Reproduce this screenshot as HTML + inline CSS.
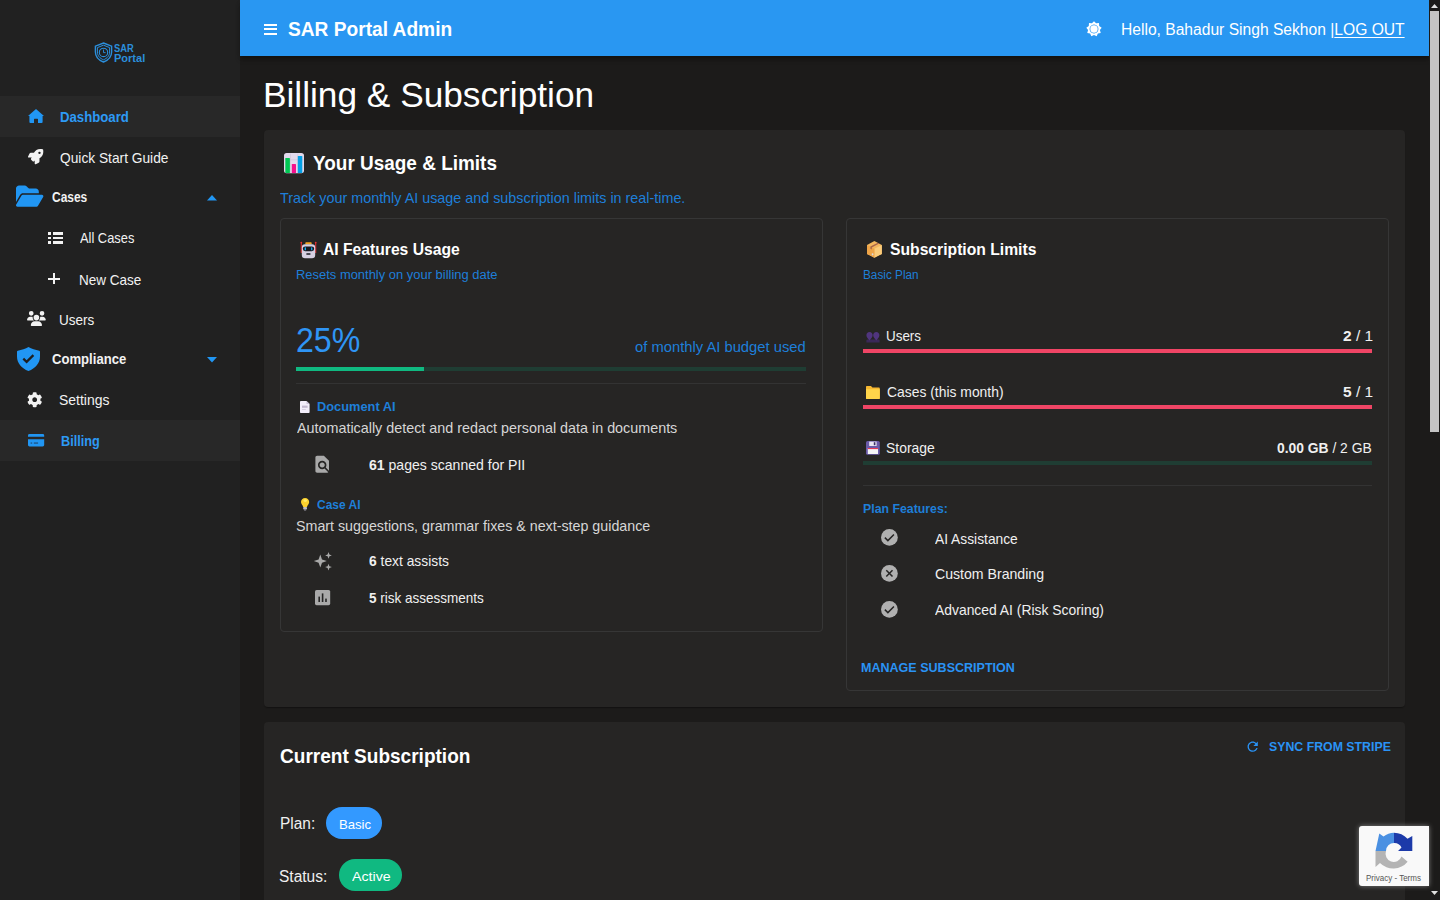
<!DOCTYPE html>
<html><head><meta charset="utf-8">
<style>
html,body{margin:0;padding:0;}
body{width:1440px;height:900px;overflow:hidden;position:relative;background:#1c1b1a;font-family:"Liberation Sans",sans-serif;color:#fff;}
.a{position:absolute;white-space:pre;line-height:1;}
.a b{font-weight:700;}
svg{position:absolute;display:block;overflow:visible;}
.r{position:absolute;}
</style></head><body>
<!-- sidebar -->
<div class="r" style="left:0;top:0;width:240px;height:900px;background:#212121"></div>
<div class="r" style="left:0;top:96px;width:240px;height:41px;background:#282828"></div>
<div class="r" style="left:0;top:420px;width:240px;height:41px;background:#282828"></div>
<!-- header -->
<div class="r" style="left:240px;top:0;width:1189px;height:56px;background:#2997f2;box-shadow:0 2px 4px -1px rgba(0,0,0,.3),0 4px 5px 0 rgba(0,0,0,.2)"></div>
<!-- cards -->
<div class="r" style="left:264px;top:130px;width:1141px;height:577px;background:#262524;border-radius:4px;box-shadow:0 2px 1px -1px rgba(0,0,0,.2),0 1px 1px 0 rgba(0,0,0,.14)"></div>
<div class="r" style="left:280px;top:218px;width:543px;height:414px;border:1px solid #363636;border-radius:4px;box-sizing:border-box"></div>
<div class="r" style="left:846px;top:218px;width:543px;height:473px;border:1px solid #363636;border-radius:4px;box-sizing:border-box"></div>
<div class="r" style="left:264px;top:722px;width:1141px;height:200px;background:#262524;border-radius:4px"></div>
<!-- scrollbar -->
<div class="r" style="left:1429px;top:0;width:11px;height:900px;background:#1c1b1a"></div>
<div class="r" style="left:1430px;top:11px;width:9px;height:421px;background:#c4c4c4"></div>

<!-- progress bars -->
<div class="r" style="left:296px;top:367px;width:510px;height:4px;background:#1f3d33"></div>
<div class="r" style="left:296px;top:367px;width:128px;height:4px;background:#10b981"></div>
<div class="r" style="left:296px;top:383px;width:510px;height:1px;background:#333"></div>
<div class="r" style="left:863px;top:349px;width:509px;height:4px;background:#ef4565"></div>
<div class="r" style="left:863px;top:405px;width:509px;height:4px;background:#ef4565"></div>
<div class="r" style="left:863px;top:461px;width:509px;height:4px;background:#1f3d33"></div>
<div class="r" style="left:863px;top:485px;width:509px;height:1px;background:#333"></div>

<!-- chips -->
<div class="r" style="left:326px;top:807px;width:56px;height:32px;border-radius:16px;background:#3399ff"></div>
<div class="r" style="left:339.4px;top:859px;width:62.4px;height:32px;border-radius:16px;background:#10b981"></div>

<!-- recaptcha -->
<div class="r" style="left:1359px;top:826px;width:70px;height:60px;background:#f9f9f9;border-radius:3px 0 0 3px;box-shadow:0 0 5px gray"></div>

<!-- ===== ICONS ===== -->
<!-- logo shield -->
<svg style="left:94px;top:41.5px" width="19" height="21" viewBox="0 0 19 21">
 <path d="M9.5 1 L17.6 4.2 V10 C17.6 14.8 14.2 18.2 9.5 20 C4.8 18.2 1.4 14.8 1.4 10 V4.2 Z" fill="none" stroke="#2b8fdc" stroke-width="1.4"/>
 <path d="M9.5 3.2 L15.6 5.6 V10 C15.6 13.8 13 16.4 9.5 17.8 C6 16.4 3.4 13.8 3.4 10 V5.6 Z" fill="none" stroke="#2b8fdc" stroke-width="1"/>
 <circle cx="9.5" cy="10.4" r="4.2" fill="none" stroke="#2b8fdc" stroke-width="1.1"/>
 <path d="M9.5 7.6 V10.6 H11.6" fill="none" stroke="#2b8fdc" stroke-width="0.9"/>
</svg>
<!-- hamburger -->
<div class="r" style="left:264px;top:23.5px;width:12.5px;height:2px;background:#fff"></div>
<div class="r" style="left:264px;top:28.2px;width:12.5px;height:2px;background:#fff"></div>
<div class="r" style="left:264px;top:32.6px;width:12.5px;height:2px;background:#fff"></div>
<!-- sun -->
<svg style="left:1085.6px;top:20.7px" width="16" height="16" viewBox="0 0 16 16"><path fill="#fff" fill-rule="evenodd" d="M8.00 0.20 L10.05 2.36 L13.01 2.02 L13.20 5.00 L15.68 6.65 L13.91 9.04 L14.75 11.90 L11.86 12.60 L10.67 15.33 L8.00 14.00 L5.33 15.33 L4.14 12.60 L1.25 11.90 L2.09 9.04 L0.32 6.65 L2.80 5.00 L2.99 2.02 L5.95 2.36Z M8 3.6 A4.4 4.4 0 1 0 8.001 3.6Z"/><circle cx="8" cy="8" r="3.7" fill="#fff"/></svg>
<!-- home -->
<svg style="left:28px;top:109px" width="16" height="14" viewBox="0 0 16 14"><path fill="#2196f3" d="M8 0 L16 6.9 L14.6 6.9 L14.6 13 Q14.6 14 13.6 14 L10 14 L10 10.2 Q10 9.8 9.6 9.8 L6.4 9.8 Q6 9.8 6 10.2 L6 14 L2.4 14 Q1.4 14 1.4 13 L1.4 6.9 L0 6.9 Z"/></svg>
<!-- rocket -->
<svg style="left:27.5px;top:149px" width="15.3" height="15.3" viewBox="0 0 512 512"><path fill="#f2f2f2" d="M505.12019,19.09375c-1.18945-5.53125-6.65819-11-12.207-12.1875C460.716,0,435.507,0,410.40747,0,307.17523,0,245.26909,55.20312,199.05238,128H94.83772c-16.34763.01562-35.55658,11.875-42.88664,26.48438L2.51562,253.29688A28.4,28.4,0,0,0,0,264a24.00867,24.00867,0,0,0,24.00582,24H127.81618l-22.47457,22.46875c-11.36521,11.36133-12.99607,32.25781,0,45.25L156.24582,406.625c11.15623,11.1875,32.15619,13.15625,45.27726,0l22.47457-22.46875V488a24.00867,24.00867,0,0,0,24.00581,24,28.55934,28.55934,0,0,0,10.707-2.51562l98.72834-49.39063c14.62888-7.29687,26.50776-26.5,26.50776-42.85937V312.79688c72.59753-46.3125,128.03493-108.40626,128.03493-211.09376C512.07526,76.5,512.07526,51.29688,505.12019,19.09375ZM384.04033,168A40,40,0,1,1,424.05,128,40.02322,40.02322,0,0,1,384.04033,168Z"/></svg>
<!-- folder open -->
<svg style="left:15.8px;top:184.3px" width="27.4" height="24.4" viewBox="0 0 576 512"><path fill="#2196f3" d="M88.7 223.8L0 375.8V96C0 60.7 28.7 32 64 32H181.5c17 0 33.3 6.7 45.3 18.7l26.5 26.5c12 12 28.3 18.7 45.3 18.7H416c35.3 0 64 28.7 64 64v32H144c-22.8 0-43.8 12.1-55.3 31.8zm27.6 16.1C122.1 230 132.6 224 144 224H544c11.5 0 22 6.1 27.7 16.1s5.7 22.2-.1 32.1l-112 192C453.9 474 443.4 480 432 480H32c-11.5 0-22-6.1-27.7-16.1s-5.7-22.2 .1-32.1l112-192z"/></svg>
<!-- caret up -->
<svg style="left:207px;top:194.5px" width="10" height="5.5" viewBox="0 0 10 5.5"><path fill="#2196f3" d="M0 5.5 L5 0 L10 5.5Z"/></svg>
<!-- list -->
<div class="r" style="left:48px;top:232px;width:2.6px;height:2.6px;background:#f2f2f2"></div>
<div class="r" style="left:52.5px;top:232px;width:10px;height:2.6px;background:#f2f2f2"></div>
<div class="r" style="left:48px;top:236.6px;width:2.6px;height:2.6px;background:#f2f2f2"></div>
<div class="r" style="left:52.5px;top:236.6px;width:10px;height:2.6px;background:#f2f2f2"></div>
<div class="r" style="left:48px;top:241.1px;width:2.6px;height:2.6px;background:#f2f2f2"></div>
<div class="r" style="left:52.5px;top:241.1px;width:10px;height:2.6px;background:#f2f2f2"></div>
<!-- plus -->
<div class="r" style="left:48.3px;top:277.6px;width:12px;height:2px;background:#f2f2f2"></div>
<div class="r" style="left:53.3px;top:273px;width:2px;height:11.2px;background:#f2f2f2"></div>
<!-- users -->
<svg style="left:27.3px;top:311.2px" width="18.8" height="15" viewBox="0 0 640 512"><path fill="#f2f2f2" d="M144 0a80 80 0 1 1 0 160A80 80 0 1 1 144 0zM512 0a80 80 0 1 1 0 160A80 80 0 1 1 512 0zM0 298.7C0 239.8 47.8 192 106.7 192h42.7c15.9 0 31 3.5 44.6 9.7c-1.3 7.2-1.9 14.7-1.9 22.3c0 38.2 16.8 72.5 43.3 96c-.2 0-.4 0-.7 0H21.3C9.6 320 0 310.4 0 298.7zM405.3 320c-.2 0-.4 0-.7 0c26.6-23.5 43.3-57.8 43.3-96c0-7.6-.7-15-1.9-22.3c13.6-6.3 28.7-9.7 44.6-9.7h42.7C592.2 192 640 239.8 640 298.7c0 11.8-9.6 21.3-21.3 21.3H405.3zM224 224a96 96 0 1 1 192 0 96 96 0 1 1 -192 0zM128 485.3C128 411.7 187.7 352 261.3 352H378.7C452.3 352 512 411.7 512 485.3c0 14.7-11.9 26.7-26.7 26.7H154.7c-14.7 0-26.7-11.9-26.7-26.7z"/></svg>
<!-- shield check -->
<svg style="left:16.7px;top:347px" width="23" height="24" viewBox="0 0 23 24"><path fill="#2196f3" d="M11.5 0 C14.5 1.6 18.5 3 22.2 3.8 C22.9 4 23 4.4 23 5 V9.5 C23 16 18.4 21.5 11.5 24 C4.6 21.5 0 16 0 9.5 V5 C0 4.4 0.1 4 0.8 3.8 C4.5 3 8.5 1.6 11.5 0Z"/><path d="M6.3 11.6 L9.6 14.9 L16.4 8.1" fill="none" stroke="#1f1f1f" stroke-width="2.2"/></svg>
<!-- caret down -->
<svg style="left:207px;top:356.7px" width="10" height="5.5" viewBox="0 0 10 5.5"><path fill="#2196f3" d="M0 0 L10 0 L5 5.5Z"/></svg>
<!-- gear -->
<svg style="left:27.26px;top:392.26px" width="15.4" height="15.4" viewBox="0 0 512 512"><path fill="#f2f2f2" d="M487.4 315.7l-42.6-24.6c4.3-23.2 4.3-47 0-70.2l42.6-24.6c4.9-2.8 7.1-8.6 5.5-14-11.1-35.6-30-67.8-54.7-94.6-3.8-4.1-10-5.1-14.8-2.3L380.8 110c-17.9-15.4-38.5-27.3-60.8-35.1V25.8c0-5.6-3.9-10.5-9.4-11.7-36.7-8.2-74.3-7.8-109.2 0-5.5 1.200-9.4 6.1-9.4 11.7V75c-22.2 7.9-42.8 19.8-60.8 35.1L88.7 85.5c-4.9-2.8-11-1.9-14.8 2.3-24.7 26.7-43.6 58.9-54.7 94.600-1.700 5.4.6 11.2 5.5 14L67.3 221c-4.300 23.2-4.3 47 0 70.2l-42.6 24.6c-4.9 2.8-7.1 8.6-5.5 14 11.1 35.6 30 67.8 54.7 94.6 3.8 4.1 10 5.1 14.8 2.3l42.6-24.6c17.9 15.4 38.5 27.3 60.8 35.1v49.2c0 5.6 3.9 10.5 9.4 11.7 36.7 8.2 74.3 7.8 109.2 0 5.5-1.2 9.4-6.1 9.4-11.7v-49.2c22.2-7.9 42.8-19.8 60.8-35.1l42.6 24.6c4.9 2.8 11 1.9 14.8-2.3 24.7-26.7 43.6-58.9 54.7-94.6 1.5-5.500-.7-11.3-5.6-14.1zM256 336c-44.1 0-80-35.9-80-80s35.9-80 80-80 80 35.9 80 80-35.9 80-80 80z"/></svg>
<!-- credit card -->
<svg style="left:27.8px;top:433.5px" width="16.2" height="12.5" viewBox="0 0 16.2 12.5"><path fill="#2196f3" d="M1.5 0 H14.7 Q16.2 0 16.2 1.5 V2.8 H0 V1.5 Q0 0 1.5 0Z M0 5.3 H16.2 V11 Q16.2 12.5 14.7 12.5 H1.5 Q0 12.5 0 11Z"/><rect x="2.6" y="8.6" width="1.6" height="0.9" fill="#1f3550"/><rect x="5.8" y="8.6" width="4.3" height="0.9" fill="#1f3550"/></svg>

<!-- ===== MAIN EMOJIS/ICONS ===== -->
<!-- chart emoji -->
<svg style="left:284px;top:152.8px" width="20" height="20.2" viewBox="0 0 20 20.2">
 <rect x="0" y="0" width="20" height="20.2" rx="2.6" fill="#e2d9ec"/>
 <path d="M6.5 0.5 V20 M13.8 0.5 V20 M0.5 6.8 H19.5" stroke="#cdc3d8" stroke-width="0.6"/>
 <rect x="1.3" y="5" width="4.6" height="15" rx="0.6" fill="#00c853"/>
 <rect x="7.8" y="10.9" width="4.2" height="9.1" rx="0.6" fill="#f50f8c"/>
 <rect x="13.8" y="3" width="4.5" height="17" rx="0.6" fill="#03a0e6"/>
</svg>
<!-- robot emoji -->
<svg style="left:299.5px;top:240.5px" width="17" height="17.5" viewBox="0 0 17 17.5">
 <path d="M1.3 1.5 V12" stroke="#d9302f" stroke-width="1.1"/><path d="M15.7 1.5 V12" stroke="#d9302f" stroke-width="1.1"/>
 <circle cx="1.3" cy="1.6" r="0.9" fill="#f03030"/><circle cx="15.7" cy="1.6" r="0.9" fill="#f03030"/>
 <rect x="5.3" y="1.3" width="6.4" height="2.2" rx="0.8" fill="#f5a623"/>
 <rect x="1.8" y="3.2" width="13.4" height="14" rx="3.2" fill="#d6d0e2"/>
 <rect x="2.8" y="5.4" width="11.4" height="4.8" rx="2.4" fill="#1a1a22"/>
 <rect x="4.6" y="6.3" width="1.4" height="3" rx="0.6" fill="#10b0f0"/><rect x="11" y="6.3" width="1.4" height="3" rx="0.6" fill="#10a0e0"/>
 <rect x="6.2" y="12.2" width="4.4" height="1.6" rx="0.7" fill="#1a1a22"/>
</svg>
<!-- doc emoji -->
<svg style="left:300.2px;top:400.9px" width="9.6" height="12" viewBox="0 0 9.6 12">
 <path d="M0.8 0 H6.5 L9.6 3 V11.2 Q9.6 12 8.8 12 H0.8 Q0 12 0 11.2 V0.8 Q0 0 0.8 0Z" fill="#f3eefa"/>
 <path d="M6.5 0 V2.4 Q6.5 3 7.1 3 H9.6Z" fill="#c9c0d6"/>
 <rect x="2" y="4.6" width="5.6" height="2.2" fill="#c2b8cf"/><rect x="2" y="8.1" width="3.8" height="0.8" fill="#d0c8dc"/>
</svg>
<!-- bulb emoji -->
<svg style="left:300.8px;top:498.2px" width="8.2" height="12.6" viewBox="0 0 8.2 12.6">
 <path d="M4.1 0 C6.5 0 8.2 1.8 8.2 4 C8.2 6 6.6 6.9 6 9 H2.2 C1.6 6.9 0 6 0 4 C0 1.8 1.7 0 4.1 0Z" fill="#fcd22e"/>
 <ellipse cx="4.3" cy="2.6" rx="1.8" ry="1.3" fill="#fff27a" opacity="0.8"/>
 <rect x="2.2" y="9" width="3.8" height="2.6" rx="0.8" fill="#bdbdc6"/>
 <rect x="3" y="11.4" width="2.2" height="1.2" rx="0.5" fill="#9a9aa6"/>
</svg>
<!-- find in page -->
<svg style="left:312.4px;top:453.6px" width="20.4" height="20.4" viewBox="0 0 24 24"><path fill="#a9a9a9" d="M20 19.59V8l-6-6H6c-1.1 0-1.99.9-1.99 2L4 20c0 1.1.89 2 1.99 2H18c.45 0 .85-.15 1.19-.4l-4.43-4.43c-.8.52-1.74.83-2.76.83-2.760 0-5-2.24-5-5s2.24-5 5-5 5 2.24 5 5c0 1.02-.31 1.96-.83 2.75L20 19.59zM9 13c0 1.66 1.34 3 3 3s3-1.34 3-3-1.34-3-3-3-3 1.34-3 3z"/></svg>
<!-- sparkles -->
<svg style="left:308px;top:548px" width="30" height="30" viewBox="0 0 30 30"><path fill="#a9a9a9" d="M12.3 6.6 L14 11.4 L18.8 13.1 L14 14.8 L12.3 19.6 L10.6 14.8 L5.8 13.1 L10.6 11.4Z M20.5 4 L21.4 6.5 L23.9 7.4 L21.4 8.3 L20.5 10.8 L19.6 8.3 L17.1 7.4 L19.6 6.5Z M20.5 15.7 L21.4 18.2 L23.9 19.1 L21.4 20 L20.5 22.5 L19.6 20 L17.1 19.1 L19.6 18.2Z"/></svg>
<!-- assessment -->
<svg style="left:314.9px;top:589.7px" width="15.2" height="15.2" viewBox="0 0 15.2 15.2"><rect x="0" y="0" width="15.2" height="15.2" rx="1.6" fill="#a9a9a9"/><rect x="3.4" y="6.6" width="1.6" height="5.4" fill="#252525"/><rect x="6.8" y="3.4" width="1.6" height="8.6" fill="#252525"/><rect x="10.2" y="8.6" width="1.6" height="3.4" fill="#252525"/></svg>
<!-- box emoji -->
<svg style="left:866.5px;top:240.8px" width="14.8" height="16.8" viewBox="0 0 14.8 16.8">
 <path d="M7.4 0 L14.8 3.9 V12.9 L7.4 16.8 L0 12.9 V3.9Z" fill="#f3b65e"/>
 <path d="M7.4 7.8 L14.8 3.9 V12.9 L7.4 16.8Z" fill="#fbcc7a"/>
 <path d="M0 3.9 L7.4 7.8 V16.8 L0 12.9Z" fill="#eea447"/>
 <path d="M3.4 5.6 L10.8 1.7 L12.2 2.5 L4.8 6.4 V8.5 L3.4 7.8Z" fill="#a8654a"/>
 <ellipse cx="5.6" cy="13.3" rx="0.9" ry="1.1" fill="#d8dce6"/>
</svg>
<!-- users emoji -->
<svg style="left:865.8px;top:332.3px" width="14" height="10.4" viewBox="0 0 14 10.4">
 <path d="M0.4 10.4 V8.6 Q0.4 7.6 1.4 7.6 H12.6 Q13.6 7.6 13.6 8.6 V10.4Z" fill="#3a2858"/>
 <path d="M3.5 0 C5.4 0 6.6 1.4 6.6 3.2 C6.6 5.2 4.8 7 3.5 8.4 C2.2 7 0.4 5.2 0.4 3.2 C0.4 1.4 1.6 0 3.5 0Z" fill="#50357e"/>
 <path d="M10.3 0 C12.2 0 13.4 1.4 13.4 3.2 C13.4 5.2 11.6 7 10.3 8.4 C9 7 7.2 5.2 7.2 3.2 C7.2 1.4 8.4 0 10.3 0Z" fill="#50357e"/>
</svg>
<!-- folder emoji -->
<svg style="left:865.8px;top:385.8px" width="13.8" height="13" viewBox="0 0 13.8 13">
 <path d="M0.8 0 H5 L6.4 1.6 H13 Q13.8 1.6 13.8 2.4 V12.2 Q13.8 13 13 13 H0.8 Q0 13 0 12.2 V0.8 Q0 0 0.8 0Z" fill="#f5b731"/>
 <path d="M0 3.2 H13.8 V12.2 Q13.8 13 13 13 H0.8 Q0 13 0 12.2Z" fill="#ffd54a"/>
</svg>
<!-- floppy emoji -->
<svg style="left:865.8px;top:441.3px" width="13.8" height="13.8" viewBox="0 0 13.8 13.8">
 <rect x="0" y="0" width="13.8" height="13.8" rx="1.6" fill="#6a5aa8"/>
 <rect x="3.2" y="0.6" width="7.4" height="4.4" fill="#e9e6f2"/><rect x="7.8" y="1.2" width="1.6" height="3" fill="#3a2f66"/>
 <rect x="1.8" y="7" width="10.2" height="6" fill="#f4f4f6"/><rect x="1.8" y="7" width="10.2" height="1.1" fill="#e53955"/>
</svg>
<!-- check circles -->
<svg style="left:881px;top:528.9px" width="16.8" height="16.8" viewBox="2 2 20 20"><circle cx="12" cy="12" r="10" fill="#b0b0b0"/><path d="M6.6 12.3 L10.2 15.8 L17.4 8.6" fill="none" stroke="#262524" stroke-width="1.8"/></svg>
<svg style="left:881px;top:564.8px" width="16.8" height="16.8" viewBox="2 2 20 20"><circle cx="12" cy="12" r="10" fill="#b0b0b0"/><path d="M8.3 8.3 L15.7 15.7 M15.7 8.3 L8.3 15.7" fill="none" stroke="#262524" stroke-width="1.8"/></svg>
<svg style="left:881px;top:600.9px" width="16.8" height="16.8" viewBox="2 2 20 20"><circle cx="12" cy="12" r="10" fill="#b0b0b0"/><path d="M6.6 12.3 L10.2 15.8 L17.4 8.6" fill="none" stroke="#262524" stroke-width="1.8"/></svg>
<!-- refresh -->
<svg style="left:1244.6px;top:738.6px" width="15.4" height="15.4" viewBox="0 0 24 24"><path fill="#2a93f5" d="M17.65 6.35C16.2 4.9 14.21 4 12 4c-4.42 0-7.99 3.58-7.99 8s3.57 8 7.99 8c3.73 0 6.84-2.55 7.73-6h-2.08c-.82 2.33-3.04 4-5.65 4-3.31 0-6-2.69-6-6s2.69-6 6-6c1.66 0 3.14.69 4.22 1.78L13 11h7V4l-2.35 2.35z"/></svg>
<!-- recaptcha logo -->
<svg style="left:1375px;top:832px" width="38" height="39" viewBox="0 0 38 39">
 <path d="M0.5 19 L4.3 1.4 L8.5 4.5 A18.5 18.5 0 0 1 19 0.8 V11 A8 8 0 0 0 11 19Z" fill="#4a90e2"/>
 <path d="M19 0.8 A18.5 18.5 0 0 1 32.5 6.8 L37.3 4 V19 H23 L26.5 15.5 A8 8 0 0 0 19 11Z" fill="#1c3aa9"/>
 <path d="M0.5 19 H11 A8 8 0 0 0 26.5 24.5 L32.6 29.7 A18.5 18.5 0 0 1 5 31 L0.5 35Z" fill="#b4b4b4"/>
</svg>
<div class="a" style="left:1365.5px;top:873.5px;font-size:9.3px;color:#555;transform:scaleX(0.86);transform-origin:0 0">Privacy - Terms</div>
<!-- scrollbar arrows -->
<svg style="left:1431px;top:4px" width="7" height="4" viewBox="0 0 7 4"><path d="M0 4 L3.5 0 L7 4Z" fill="#e0e0e0"/></svg>
<svg style="left:1431px;top:891px" width="7" height="4" viewBox="0 0 7 4"><path d="M0 0 L7 0 L3.5 4Z" fill="#e0e0e0"/></svg>

<div class="a" style="left:288.02px;top:19.03px;font-size:20px;color:#ffffff;font-weight:700;transform:scaleX(0.9571);transform-origin:0 0;">SAR Portal Admin</div>
<div class="a" style="left:1120.83px;top:22.15px;font-size:16px;color:#ffffff;font-weight:400;transform:scaleX(0.9761);transform-origin:0 0;">Hello, Bahadur Singh Sekhon |<u style="text-decoration-thickness:1px;text-underline-offset:2px">LOG OUT</u></div>
<div class="a" style="left:114.46px;top:43.42px;font-size:11.8px;color:#2b8fdc;font-weight:700;transform:scaleX(0.7912);transform-origin:0 0;">SAR</div>
<div class="a" style="left:114.42px;top:52.69px;font-size:11.8px;color:#2b8fdc;font-weight:700;transform:scaleX(0.9336);transform-origin:0 0;">Portal</div>
<div class="a" style="left:60.21px;top:110.16px;font-size:14.3px;color:#2d9af5;font-weight:700;transform:scaleX(0.9217);transform-origin:0 0;">Dashboard</div>
<div class="a" style="left:60.00px;top:151.42px;font-size:14.5px;color:#f2f2f2;font-weight:400;transform:scaleX(0.9474);transform-origin:0 0;">Quick Start Guide</div>
<div class="a" style="left:52.00px;top:190.19px;font-size:14.5px;color:#f2f2f2;font-weight:700;transform:scaleX(0.8257);transform-origin:0 0;">Cases</div>
<div class="a" style="left:80.00px;top:230.82px;font-size:14.5px;color:#f2f2f2;font-weight:400;transform:scaleX(0.8870);transform-origin:0 0;">All Cases</div>
<div class="a" style="left:79.07px;top:273.02px;font-size:14.5px;color:#f2f2f2;font-weight:400;transform:scaleX(0.9304);transform-origin:0 0;">New Case</div>
<div class="a" style="left:59.07px;top:313.42px;font-size:14.5px;color:#f2f2f2;font-weight:400;transform:scaleX(0.9302);transform-origin:0 0;">Users</div>
<div class="a" style="left:52.00px;top:352.19px;font-size:14.5px;color:#f2f2f2;font-weight:700;transform:scaleX(0.9037);transform-origin:0 0;">Compliance</div>
<div class="a" style="left:59.04px;top:393.42px;font-size:14.5px;color:#f2f2f2;font-weight:400;transform:scaleX(0.9629);transform-origin:0 0;">Settings</div>
<div class="a" style="left:61.23px;top:434.16px;font-size:14.3px;color:#2d9af5;font-weight:700;transform:scaleX(0.8885);transform-origin:0 0;">Billing</div>
<div class="a" style="left:262.79px;top:77.42px;font-size:35.2px;color:#ffffff;font-weight:400;transform:scaleX(1.0018);transform-origin:0 0;">Billing &amp; Subscription</div>
<div class="a" style="left:313.05px;top:152.29px;font-size:21px;color:#ffffff;font-weight:700;transform:scaleX(0.9025);transform-origin:0 0;">Your Usage &amp; Limits</div>
<div class="a" style="left:280.00px;top:190.92px;font-size:14.5px;color:#1e7fd9;font-weight:400;transform:scaleX(0.9895);transform-origin:0 0;">Track your monthly AI usage and subscription limits in real-time.</div>
<div class="a" style="left:323.19px;top:242.41px;font-size:16px;color:#ffffff;font-weight:700;transform:scaleX(0.9793);transform-origin:0 0;">AI Features Usage</div>
<div class="a" style="left:295.77px;top:268.52px;font-size:12.5px;color:#1e7fd9;font-weight:400;transform:scaleX(1.0356);transform-origin:0 0;">Resets monthly on your billing date</div>
<div class="a" style="left:296.30px;top:321.59px;font-size:35px;color:#2f95f5;font-weight:400;transform:scaleX(0.9177);transform-origin:0 0;">25%</div>
<div class="a" style="left:635.39px;top:339.71px;font-size:14.5px;color:#1e7fd9;font-weight:400;transform:scaleX(1.0180);transform-origin:0 0;">of monthly AI budget used</div>
<div class="a" style="left:316.98px;top:400.71px;font-size:12.5px;color:#1e7fd9;font-weight:700;transform:scaleX(1.0265);transform-origin:0 0;">Document AI</div>
<div class="a" style="left:297.00px;top:421.42px;font-size:14.5px;color:#d6d6d6;font-weight:400;transform:scaleX(0.9891);transform-origin:0 0;">Automatically detect and redact personal data in documents</div>
<div class="a" style="left:368.80px;top:458.03px;font-size:14.5px;color:#f0f0f0;font-weight:400;transform:scaleX(0.9690);transform-origin:0 0;"><b>61</b> pages scanned for PII</div>
<div class="a" style="left:317.02px;top:498.61px;font-size:12.5px;color:#1e7fd9;font-weight:700;transform:scaleX(0.9580);transform-origin:0 0;">Case AI</div>
<div class="a" style="left:296.02px;top:519.42px;font-size:14.5px;color:#d6d6d6;font-weight:400;transform:scaleX(0.9833);transform-origin:0 0;">Smart suggestions, grammar fixes &amp; next-step guidance</div>
<div class="a" style="left:369.21px;top:554.40px;font-size:14.5px;color:#f0f0f0;font-weight:400;transform:scaleX(0.9531);transform-origin:0 0;"><b>6</b> text assists</div>
<div class="a" style="left:369.21px;top:590.90px;font-size:14.5px;color:#f0f0f0;font-weight:400;transform:scaleX(0.9317);transform-origin:0 0;"><b>5</b> risk assessments</div>
<div class="a" style="left:890.00px;top:242.40px;font-size:16px;color:#ffffff;font-weight:700;transform:scaleX(0.9805);transform-origin:0 0;">Subscription Limits</div>
<div class="a" style="left:863.18px;top:268.52px;font-size:12.5px;color:#1e7fd9;font-weight:400;transform:scaleX(0.9412);transform-origin:0 0;">Basic Plan</div>
<div class="a" style="left:885.88px;top:328.82px;font-size:14.5px;color:#f0f0f0;font-weight:400;transform:scaleX(0.9256);transform-origin:0 0;">Users</div>
<div class="a" style="left:1342.56px;top:328.81px;font-size:14.5px;color:#f0f0f0;font-weight:400;transform:scaleX(1.0684);transform-origin:0 0;"><b>2</b> / 1</div>
<div class="a" style="left:886.81px;top:385.43px;font-size:14.5px;color:#f0f0f0;font-weight:400;transform:scaleX(0.9579);transform-origin:0 0;">Cases (this month)</div>
<div class="a" style="left:1342.56px;top:385.41px;font-size:14.5px;color:#f0f0f0;font-weight:400;transform:scaleX(1.0684);transform-origin:0 0;"><b>5</b> / 1</div>
<div class="a" style="left:885.81px;top:440.83px;font-size:14.5px;color:#f0f0f0;font-weight:400;transform:scaleX(0.9600);transform-origin:0 0;">Storage</div>
<div class="a" style="left:1277.00px;top:440.82px;font-size:14.5px;color:#f0f0f0;font-weight:400;transform:scaleX(0.9546);transform-origin:0 0;"><b>0.00 GB</b> / 2 GB</div>
<div class="a" style="left:863.43px;top:502.85px;font-size:12.8px;color:#1e7fd9;font-weight:700;transform:scaleX(0.9621);transform-origin:0 0;">Plan Features:</div>
<div class="a" style="left:935.00px;top:531.72px;font-size:14.5px;color:#f0f0f0;font-weight:400;transform:scaleX(0.9512);transform-origin:0 0;">AI Assistance</div>
<div class="a" style="left:935.00px;top:566.67px;font-size:14.5px;color:#f0f0f0;font-weight:400;transform:scaleX(0.9732);transform-origin:0 0;">Custom Branding</div>
<div class="a" style="left:935.00px;top:602.67px;font-size:14.5px;color:#f0f0f0;font-weight:400;transform:scaleX(0.9574);transform-origin:0 0;">Advanced AI (Risk Scoring)</div>
<div class="a" style="left:860.63px;top:661.43px;font-size:13.3px;color:#2a93f5;font-weight:700;transform:scaleX(0.9426);transform-origin:0 0;">MANAGE SUBSCRIPTION</div>
<div class="a" style="left:280.27px;top:745.39px;font-size:21px;color:#ffffff;font-weight:700;transform:scaleX(0.9067);transform-origin:0 0;">Current Subscription</div>
<div class="a" style="left:1268.86px;top:740.43px;font-size:13.3px;color:#2a93f5;font-weight:700;transform:scaleX(0.9267);transform-origin:0 0;">SYNC FROM STRIPE</div>
<div class="a" style="left:279.83px;top:816.31px;font-size:15.8px;color:#f0f0f0;font-weight:400;transform:scaleX(0.9767);transform-origin:0 0;">Plan:</div>
<div class="a" style="left:338.62px;top:817.97px;font-size:13.5px;color:#ffffff;font-weight:400;transform:scaleX(0.9723);transform-origin:0 0;">Basic</div>
<div class="a" style="left:279.01px;top:868.61px;font-size:15.8px;color:#f0f0f0;font-weight:400;transform:scaleX(0.9814);transform-origin:0 0;">Status:</div>
<div class="a" style="left:351.77px;top:869.87px;font-size:13.5px;color:#ffffff;font-weight:400;transform:scaleX(1.0530);transform-origin:0 0;">Active</div>
</body></html>
